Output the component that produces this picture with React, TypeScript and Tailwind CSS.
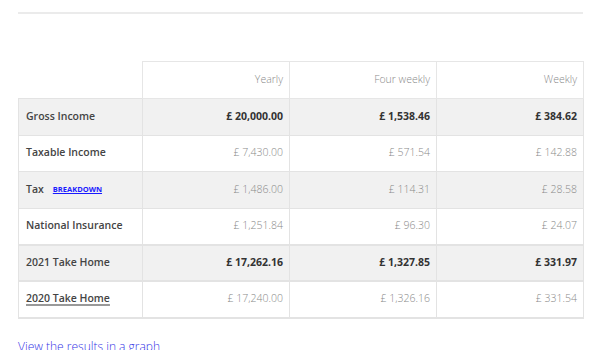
import React from "react";

const rows = [
  { label: "Gross Income", values: ["£ 20,000.00", "£ 1,538.46", "£ 384.62"], shaded: true, strong: true },
  { label: "Taxable Income", values: ["£ 7,430.00", "£ 571.54", "£ 142.88"] },
  { label: "Tax", values: ["£ 1,486.00", "£ 114.31", "£ 28.58"], shaded: true, breakdown: true },
  { label: "National Insurance", values: ["£ 1,251.84", "£ 96.30", "£ 24.07"] },
  { label: "2021 Take Home", values: ["£ 17,262.16", "£ 1,327.85", "£ 331.97"], shaded: true, strong: true, thick: true },
  { label: "2020 Take Home", values: ["£ 17,240.00", "£ 1,326.16", "£ 331.54"], thick: true, underline: true, last: true },
];

export default function App() {
  return (
    <div className="w-[600px] h-[350px] overflow-hidden bg-white font-['Open_Sans',sans-serif]">
      <div className="px-[18px] pt-[12px]">
        <div className="h-[2px] w-[565px] bg-[#ebebeb]" />

        <table className="mt-[47px] w-[565px] border-collapse table-fixed text-[10.5px]">
          <colgroup>
            <col className="w-[124px]" />
            <col className="w-[147px]" />
            <col className="w-[147px]" />
            <col className="w-[147px]" />
          </colgroup>
          <thead>
            <tr className="h-[37px]">
              <th />
              {["Yearly", "Four weekly", "Weekly"].map((h) => (
                <th
                  key={h}
                  className="border border-[#e6e6e6] px-[6px] text-right font-light text-[#8a8a8a]"
                >
                  {h}
                </th>
              ))}
            </tr>
          </thead>
          <tbody>
            {rows.map((r) => {
              const edge = r.thick ? "border-t-2" : "border-t";
              return (
                <tr key={r.label} className={`h-[36.5px] ${r.shaded ? "bg-[#f1f1f1]" : "bg-white"}`}>
                  <td
                    className={`${edge} border-x ${r.last ? "border-b-2" : "border-b"} border-[#e3e3e3] pl-[7px] pr-1 font-semibold text-[#444]`}
                  >
                    <span className={r.underline ? "underline decoration-[#999] decoration-2 underline-offset-2" : ""}>
                      {r.label}
                    </span>
                    {r.breakdown && (
                      <a href="#" className="ml-[9px] text-[7.5px] font-bold text-[#1a1aff] underline align-[1px]">
                        BREAKDOWN
                      </a>
                    )}
                  </td>
                  {r.values.map((v, i) => (
                    <td
                      key={i}
                      className={`${edge} border-x ${r.last ? "border-b-2" : "border-b"} border-[#e3e3e3] px-[6px] text-right ${
                        r.strong ? "font-bold text-[#333]" : "font-light text-[#8a8a8a]"
                      }`}
                    >
                      {v}
                    </td>
                  ))}
                </tr>
              );
            })}
          </tbody>
        </table>

        <a href="#" className="mt-[19px] block text-[12px] font-light text-[#3333e6]">
          View the results in a graph
        </a>
      </div>
    </div>
  );
}
